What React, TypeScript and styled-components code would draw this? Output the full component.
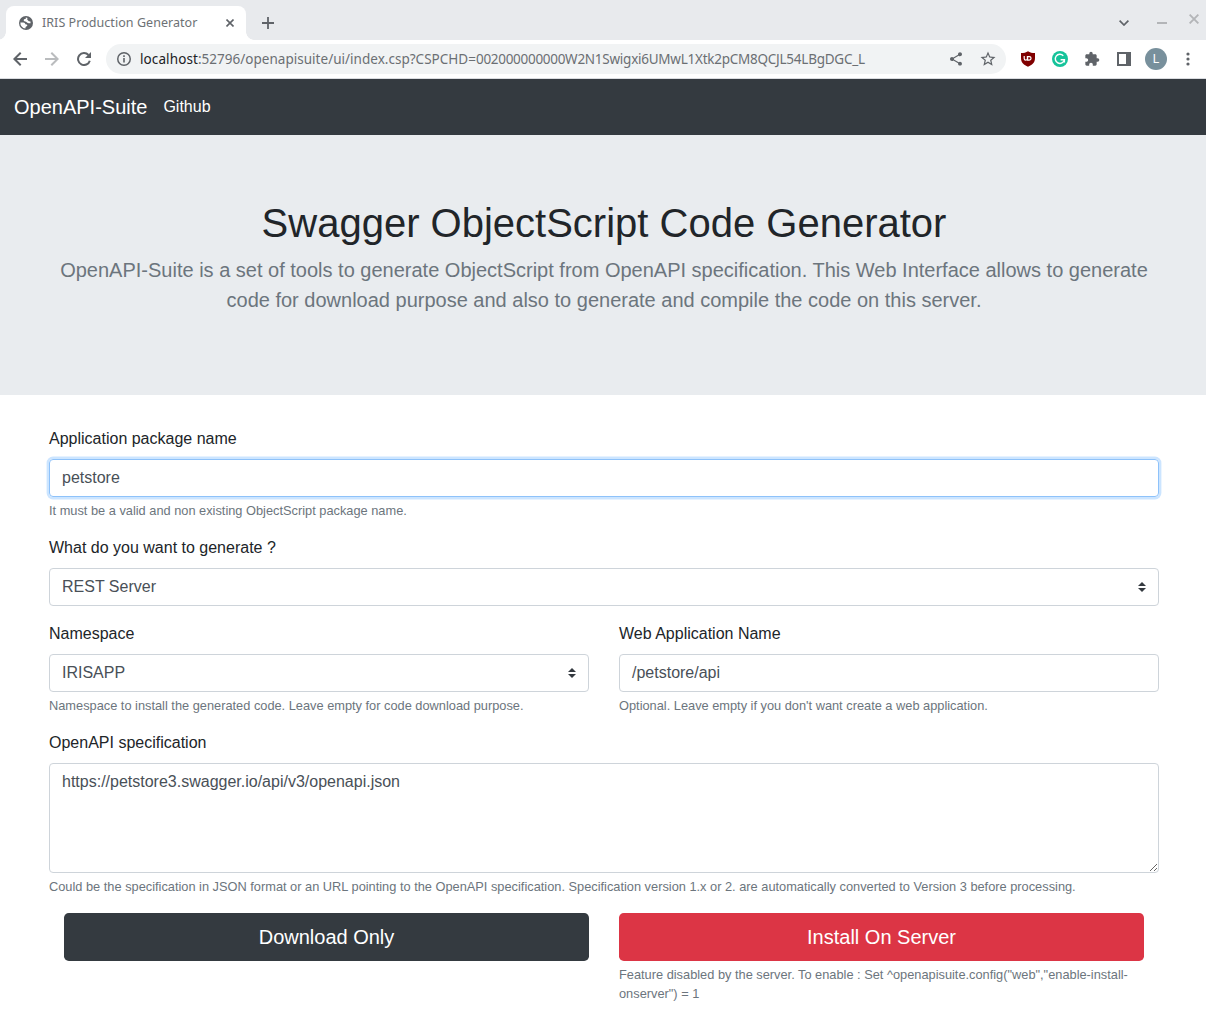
import React from "react";
import styled, { createGlobalStyle } from "styled-components";
import {
  MdExtension,
  MdShare,
  MdStarBorder,
} from "react-icons/md";

const GlobalStyle = createGlobalStyle`
  *, *::before, *::after { box-sizing: border-box; }
  html, body { margin: 0; padding: 0; background: #fff; }
  body {
    font-family: "Liberation Sans", Arial, sans-serif;
    font-size: 16px;
    line-height: 1.5;
    color: #212529;
    overflow: hidden;
  }
`;

const Window = styled.div`
  width: 1206px;
  height: 1019px;
  overflow: hidden;
  background: #fff;
`;

const TabStrip = styled.div`
  display: flex;
  height: 40px;
  padding: 6px 0 0 6px;
  background: #e8eaed;
`;

const Tab = styled.div`
  position: relative;
  display: flex;
  align-items: center;
  width: 240px;
  height: 34px;
  padding: 0 12px 0 13px;
  border-radius: 8px 8px 0 0;
  background: #fff;
  color: #5f6368;

  &::before,
  &::after {
    content: "";
    position: absolute;
    bottom: 0;
    width: 8px;
    height: 8px;
  }
  &::before {
    left: -8px;
    background: radial-gradient(circle at 0 0, transparent 7.5px, #fff 8px);
  }
  &::after {
    right: -8px;
    background: radial-gradient(circle at 100% 0, transparent 7.5px, #fff 8px);
  }
`;

const TabTitle = styled.span`
  flex: 1;
  margin-left: 9px;
  font-family: "Noto Sans", sans-serif;
  font-size: 12.5px;
  line-height: 18px;
  letter-spacing: 0.05px;
  white-space: nowrap;
  color: #6d7175;
`;

const StripButton = styled.div<{ $left?: number; $color?: string; $shift?: number }>`
  display: flex;
  align-items: center;
  justify-content: center;
  width: 20px;
  height: 34px;
  margin-left: ${(p) => p.$left ?? 0}px;
  padding-bottom: ${(p) => p.$shift ?? 0}px;
  color: ${(p) => p.$color ?? "#5f6368"};
`;

const Toolbar = styled.div`
  display: flex;
  align-items: center;
  height: 39px;
  padding: 0 0 0 4px;
  border-bottom: 1px solid #dadce0;
  background: #fff;
`;

const Slot = styled.div<{ $muted?: boolean }>`
  display: flex;
  flex: none;
  align-items: center;
  justify-content: center;
  width: 32px;
  height: 32px;
  color: ${(p) => (p.$muted ? "#babcbe" : "#5f6368")};
`;

const AddressBar = styled.div`
  display: flex;
  align-items: center;
  width: 900px;
  height: 30px;
  margin: 0 6px;
  padding: 0 2px;
  border-radius: 15px;
  background: #f1f3f4;
`;

const Url = styled.span`
  flex: 1;
  font-family: "Noto Sans", sans-serif;
  font-size: 13.5px;
  line-height: 20px;
  white-space: nowrap;
  color: #6b6f73;
`;

const UrlPart = styled.span<{ $spacing: number; $host?: boolean }>`
  letter-spacing: ${(p) => p.$spacing}px;
  color: ${(p) => (p.$host ? "#202124" : "inherit")};
`;

const Avatar = styled.div`
  width: 22px;
  height: 22px;
  border-radius: 50%;
  background: #78909c;
  color: #fff;
  font: 12px/22px Roboto, sans-serif;
  text-align: center;
`;

const Navbar = styled.nav`
  display: flex;
  align-items: center;
  gap: 16px;
  height: 56px;
  padding: 0 14px;
  background: #343a40;
  color: #fff;
`;

const Brand = styled.span`
  font-size: 20px;
  line-height: 30px;
`;

const NavLink = styled.span`
  font-size: 16px;
  line-height: 24px;
  padding-bottom: 1px;
`;

const Container = styled.div`
  width: 1140px;
  margin-left: 34px;
  padding: 0 15px;
`;

const Jumbotron = styled.header`
  height: 260px;
  padding: 64px 0;
  background: #e9ecef;
  text-align: center;
`;

const Title = styled.h1`
  margin: 0 0 8px;
  font-size: 40px;
  font-weight: 400;
  line-height: 48px;
`;

const Lead = styled.p`
  margin: 0;
  font-size: 20px;
  line-height: 30px;
  color: #6c757d;
`;

const Form = styled.div`
  display: flex;
  flex-direction: column;
  gap: 16px;
  padding-top: 32px;
`;

const Columns = styled.div<{ $inset?: boolean }>`
  display: grid;
  grid-template-columns: 1fr 1fr;
  column-gap: 30px;
  padding: 0 ${(p) => (p.$inset ? 15 : 0)}px;
`;

const Label = styled.label`
  display: block;
  margin-bottom: 8px;
  line-height: 24px;
`;

const Control = styled.div<{ $focused?: boolean }>`
  display: flex;
  align-items: center;
  justify-content: space-between;
  height: 38px;
  padding: 0 12px;
  border: 1px solid ${(p) => (p.$focused ? "#8ec2fa" : "#ced4da")};
  border-radius: 4px;
  box-shadow: ${(p) => (p.$focused ? "0 0 0 2.4px rgba(0, 123, 255, 0.2)" : "none")};
  color: #495057;
  line-height: 24px;
`;

const TextArea = styled.textarea`
  display: block;
  width: 100%;
  height: 110px;
  padding: 6px 12px;
  border: 1px solid #ced4da;
  border-radius: 4px;
  outline: none;
  resize: vertical;
  font: inherit;
  color: #495057;
`;

const Help = styled.small`
  display: block;
  margin-top: 4px;
  font-size: 12.8px;
  line-height: 19.2px;
  color: #6c757d;
`;

const Button = styled.button<{ $danger?: boolean }>`
  display: block;
  width: 100%;
  height: 48px;
  padding: 0;
  border: 0;
  border-radius: 4.8px;
  background: ${(p) => (p.$danger ? "#dc3545" : "#343a40")};
  color: #fff;
  font: 20px/30px "Liberation Sans", Arial, sans-serif;
`;

const SelectArrows = () => (
  <svg width="8" height="10" viewBox="0 0 4 5">
    <path fill="#343a40" d="M2 0L0 2h4zm0 5L0 3h4z" />
  </svg>
);

const GlobeIcon = () => (
  <svg width="14" height="14" viewBox="0 0 14 14">
    <circle cx="7" cy="7" r="7" fill="#5f6368" />
    <path
      fill="#fff"
      d="M7.300 1.400C8 2 7.600 3 6.600 3.200C5.500 3.500 5 4.400 5.600 5.200C6.200 5.900 7.800 5.600 8.300 6.400C8.800 7.400 9.600 7.500 10.500 7.500H12.600A5.600 5.600 0 0 0 8.900 1.800z"
      transform="translate(-.3 .1) scale(.94)"
    />
    <path
      fill="#fff"
      d="M1.400 6.400H4.300C5.500 6.400 6.200 7.200 6.300 8.200L7.600 8.400C8.400 8.600 8.500 9.400 8 10L6.600 10.900L6.400 12.500A5.600 5.600 0 0 1 1.400 6.400z"
    />
    <path fill="#5f6368" d="M8.600 1.200L12.800 4.200L12.200 5.600L9.800 5.200L8.200 3.600z" />
  </svg>
);

const ArrowIcon = ({ forward }: { forward?: boolean }) => (
  <svg width="14" height="14" viewBox="0 0 14 14" fill="none" stroke="currentColor" strokeWidth="2">
    <path d={forward ? "M0 7h12.600M6.300.7L12.600 7l-6.300 6.300" : "M14 7H1.400M7.700.7L1.400 7l6.300 6.300"} />
  </svg>
);

const ReloadIcon = () => (
  <svg width="14" height="14" viewBox="0 0 14 14">
    <path fill="none" stroke="currentColor" strokeWidth="2" d="M11.500 3A6 6 0 1 0 12.800 8.700" />
    <path fill="currentColor" d="M14 0v6H8z" />
  </svg>
);

const InfoIcon = () => (
  <svg width="14" height="14" viewBox="0 0 14 14">
    <circle cx="7" cy="7" r="6.250" fill="none" stroke="currentColor" strokeWidth="1.500" />
    <path fill="currentColor" d="M6.200 6h1.600v4.600H6.200zM6.200 3.300h1.600v1.600H6.200z" />
  </svg>
);

const CrossIcon = ({ size, weight }: { size: number; weight: number }) => (
  <svg width={size} height={size} viewBox="0 0 8 8" fill="none" stroke="currentColor" strokeWidth={weight}>
    <path d="M.5.5l7 7M7.500.5l-7 7" />
  </svg>
);

const PlusIcon = () => (
  <svg width="12" height="12" viewBox="0 0 12 12" fill="currentColor">
    <path d="M5.100 0h1.800v12H5.100zM0 5.100h12v1.800H0z" />
  </svg>
);

const MenuDotsIcon = () => (
  <svg width="4" height="14" viewBox="0 0 4 14" fill="currentColor">
    <circle cx="2" cy="2" r="1.600" />
    <circle cx="2" cy="7" r="1.600" />
    <circle cx="2" cy="12" r="1.600" />
  </svg>
);

const ShieldIcon = () => (
  <svg width="16" height="16" viewBox="0 0 16 16">
    <path
      fill="#800000"
      d="M8 .2C6.200 1.500 3.700 2 1 2v5c0 5 3 7 7 8.800C12 14 15 12 15 7V2C12.300 2 9.800 1.500 8 .2z"
    />
    <path
      fill="none"
      stroke="#fff"
      strokeWidth="1.200"
      d="M4.200 5v2.500a1.600 1.600 0 0 0 3.200 0V5M7.600 5.600v3.500h1.700a1.750 1.750 0 0 0 0-3.500z"
    />
  </svg>
);

const GrammarIcon = () => (
  <svg width="16" height="16" viewBox="0 0 16 16">
    <circle cx="8" cy="8" r="8" fill="#15c39a" />
    <path
      fill="none"
      stroke="#fff"
      strokeWidth="1.400"
      d="M11.300 4.700A4.600 4.600 0 1 0 12.400 8.800H8.600M12.400 8.300v3.200"
    />
  </svg>
);

const SidePanelIcon = () => (
  <svg width="14" height="14" viewBox="0 0 14 14">
    <path fill="#5f6368" fillRule="evenodd" d="M0 0h14v14H0zM2 2v10h7V2z" />
  </svg>
);

const ChevronIcon = () => (
  <svg width="10" height="6" viewBox="0 0 10 6" fill="none" stroke="currentColor" strokeWidth="1.700">
    <path d="M.6.6L5 5 9.400.600" />
  </svg>
);

const MinimizeIcon = () => (
  <svg width="10" height="2" viewBox="0 0 10 2">
    <path fill="currentColor" d="M0 0h10v2H0z" />
  </svg>
);

const BrowserChrome = () => (
  <>
    <TabStrip>
      <Tab>
        <GlobeIcon />
        <TabTitle>IRIS Production Generator</TabTitle>
        <CrossIcon size={8} weight={1.6} />
      </Tab>
      <StripButton $left={12}>
        <PlusIcon />
      </StripButton>
      <StripButton $left={836}>
        <ChevronIcon />
      </StripButton>
      <StripButton $left={18} $color="#b3b5b8">
        <MinimizeIcon />
      </StripButton>
      <StripButton $left={12} $shift={8} $color="#b3b5b8">
        <CrossIcon size={10} weight={1.5} />
      </StripButton>
    </TabStrip>
    <Toolbar>
      <Slot><ArrowIcon /></Slot>
      <Slot $muted><ArrowIcon forward /></Slot>
      <Slot><ReloadIcon /></Slot>
      <AddressBar>
        <Slot><InfoIcon /></Slot>
        <Url>
          <UrlPart $spacing={0.1} $host>localhost</UrlPart>
          <UrlPart $spacing={0.02}>:52796/openapisuite/ui/index.csp?CSPCHD=</UrlPart>
          <UrlPart $spacing={-0.3}>002000000000</UrlPart>
          <UrlPart $spacing={-0.25}>W2N1Swigxi6UMwL1Xtk2pCM8QCJL54LBgDGC_L</UrlPart>
        </Url>
        <Slot><MdShare size={16} /></Slot>
        <Slot><MdStarBorder size={18} /></Slot>
      </AddressBar>
      <Slot><ShieldIcon /></Slot>
      <Slot><GrammarIcon /></Slot>
      <Slot><MdExtension size={16} /></Slot>
      <Slot><SidePanelIcon /></Slot>
      <Slot><Avatar>L</Avatar></Slot>
      <Slot><MenuDotsIcon /></Slot>
    </Toolbar>
  </>
);

export default function App() {
  return (
    <Window>
      <GlobalStyle />
      <BrowserChrome />
      <Navbar>
        <Brand>OpenAPI-Suite</Brand>
        <NavLink>Github</NavLink>
      </Navbar>
      <Jumbotron>
        <Container>
          <Title>Swagger ObjectScript Code Generator</Title>
          <Lead>
            OpenAPI-Suite is a set of tools to generate ObjectScript from OpenAPI specification. This Web
            Interface allows to generate code for download purpose and also to generate and compile the code
            on this server.
          </Lead>
        </Container>
      </Jumbotron>
      <Container>
        <Form>
          <div>
            <Label>Application package name</Label>
            <Control $focused>petstore</Control>
            <Help>It must be a valid and non existing ObjectScript package name.</Help>
          </div>
          <div>
            <Label>What do you want to generate ?</Label>
            <Control>
              REST Server
              <SelectArrows />
            </Control>
          </div>
          <Columns>
            <div>
              <Label>Namespace</Label>
              <Control>
                IRISAPP
                <SelectArrows />
              </Control>
              <Help>Namespace to install the generated code. Leave empty for code download purpose.</Help>
            </div>
            <div>
              <Label>Web Application Name</Label>
              <Control>/petstore/api</Control>
              <Help>Optional. Leave empty if you don't want create a web application.</Help>
            </div>
          </Columns>
          <div>
            <Label>OpenAPI specification</Label>
            <TextArea defaultValue="https://petstore3.swagger.io/api/v3/openapi.json" />
            <Help>
              Could be the specification in JSON format or an URL pointing to the OpenAPI specification.
              Specification version 1.x or 2. are automatically converted to Version 3 before processing.
            </Help>
          </div>
          <Columns $inset>
            <div>
              <Button>Download Only</Button>
            </div>
            <div>
              <Button $danger>Install On Server</Button>
              <Help>
                Feature disabled by the server. To enable : Set
                ^openapisuite.config("web","enable-install-onserver") = 1
              </Help>
            </div>
          </Columns>
        </Form>
      </Container>
    </Window>
  );
}
